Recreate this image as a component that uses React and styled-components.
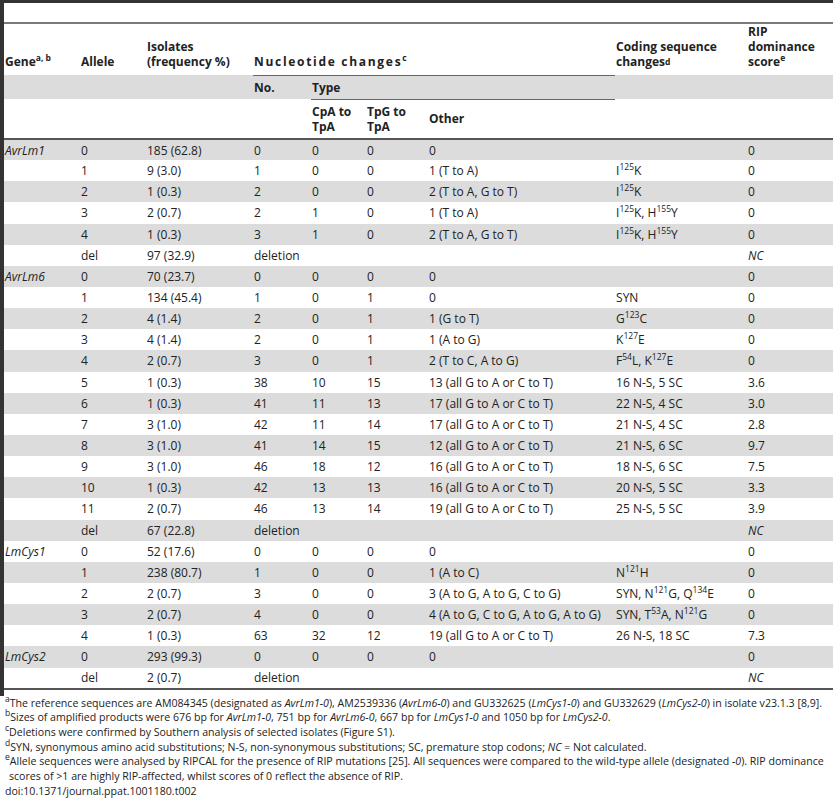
import React from "react";
import styled, { createGlobalStyle } from "styled-components";

const GlobalStyle = createGlobalStyle`
  body {
    margin: 0;
    background: #fff;
    color: #222;
    font-family: "Open Sans", "Noto Sans", sans-serif;
  }
`;

const Page = styled.div`
  width: 833px;
`;

const Frame = styled.div`
  border-top: 3px solid #333;
  border-left: 4px solid #333;
  padding-top: 19px;
  padding-bottom: 6px;
`;

const Table = styled.table`
  width: 829px;
  table-layout: fixed;
  border-collapse: collapse;
  border-top: 2px solid #7a7a7a;
  border-bottom: 2px solid #555;
  font-size: 12px;
`;

const Col = styled.col`
  width: ${(p) => p.$w}px;
`;

const Head = styled.thead`
  border-bottom: 2px solid #555;
`;

const HeadRow = styled.tr`
  height: ${(p) => p.$h}px;
  background: ${(p) => (p.$shade ? "#dcdcdc" : "transparent")};
`;

const HeadCell = styled.th`
  padding: 0 0 ${(p) => (p.$bottom ? "6px" : "0")} 1px;
  text-align: left;
  font-weight: 700;
  line-height: 15px;
  letter-spacing: ${(p) => (p.$wide ? "1.7px" : "normal")};
  vertical-align: ${(p) => (p.$bottom ? "bottom" : "middle")};
  border-bottom: ${(p) => (p.$rule ? "1px solid #666" : "none")};
`;

const Row = styled.tr`
  height: 21.15px;
  background: ${(p) => (p.$shade ? "#dcdcdc" : "transparent")};
`;

const Cell = styled.td`
  padding: 0 0 0 1px;
  line-height: 15px;
  vertical-align: middle;
  white-space: nowrap;
  font-style: ${(p) => (p.$italic ? "italic" : "normal")};
`;

const Sup = styled.sup`
  font-size: 8.5px;
  line-height: 0;
  letter-spacing: normal;
  vertical-align: ${(p) => (p.$low ? "1px" : "5px")};
  font-weight: inherit;
`;

const Notes = styled.div`
  padding: 0 0 0 5px;
  font-size: 10.6px;
  line-height: 14.7px;
  color: #222;
`;

const Note = styled.div`
  white-space: nowrap;
`;

const Indent = styled.span`
  padding-left: 4px;
`;

const Em = styled.i``;

const Mut = ({ a, n, b }) => (
  <>
    {a}
    <Sup>{n}</Sup>
    {b}
  </>
);

const all = "(all G to A or C to T)";

const rows = [
  ["AvrLm1", "0", "185 (62.8)", "0", "0", "0", "0", "", "0"],
  ["", "1", "9 (3.0)", "1", "0", "0", "1 (T to A)", <Mut a="I" n="125" b="K" />, "0"],
  ["", "2", "1 (0.3)", "2", "0", "0", "2 (T to A, G to T)", <Mut a="I" n="125" b="K" />, "0"],
  ["", "3", "2 (0.7)", "2", "1", "0", "1 (T to A)", <><Mut a="I" n="125" b="K" />, <Mut a="H" n="155" b="Y" /></>, "0"],
  ["", "4", "1 (0.3)", "3", "1", "0", "2 (T to A, G to T)", <><Mut a="I" n="125" b="K" />, <Mut a="H" n="155" b="Y" /></>, "0"],
  ["", "del", "97 (32.9)", "deletion", null, null, "", "", "NC"],
  ["AvrLm6", "0", "70 (23.7)", "0", "0", "0", "0", "", "0"],
  ["", "1", "134 (45.4)", "1", "0", "1", "0", "SYN", "0"],
  ["", "2", "4 (1.4)", "2", "0", "1", "1 (G to T)", <Mut a="G" n="123" b="C" />, "0"],
  ["", "3", "4 (1.4)", "2", "0", "1", "1 (A to G)", <Mut a="K" n="127" b="E" />, "0"],
  ["", "4", "2 (0.7)", "3", "0", "1", "2 (T to C, A to G)", <><Mut a="F" n="54" b="L" />, <Mut a="K" n="127" b="E" /></>, "0"],
  ["", "5", "1 (0.3)", "38", "10", "15", `13 ${all}`, "16 N-S, 5 SC", "3.6"],
  ["", "6", "1 (0.3)", "41", "11", "13", `17 ${all}`, "22 N-S, 4 SC", "3.0"],
  ["", "7", "3 (1.0)", "42", "11", "14", `17 ${all}`, "21 N-S, 4 SC", "2.8"],
  ["", "8", "3 (1.0)", "41", "14", "15", `12 ${all}`, "21 N-S, 6 SC", "9.7"],
  ["", "9", "3 (1.0)", "46", "18", "12", `16 ${all}`, "18 N-S, 6 SC", "7.5"],
  ["", "10", "1 (0.3)", "42", "13", "13", `16 ${all}`, "20 N-S, 5 SC", "3.3"],
  ["", "11", "2 (0.7)", "46", "13", "14", `19 ${all}`, "25 N-S, 5 SC", "3.9"],
  ["", "del", "67 (22.8)", "deletion", null, null, "", "", "NC"],
  ["LmCys1", "0", "52 (17.6)", "0", "0", "0", "0", "", "0"],
  ["", "1", "238 (80.7)", "1", "0", "0", "1 (A to C)", <Mut a="N" n="121" b="H" />, "0"],
  ["", "2", "2 (0.7)", "3", "0", "0", "3 (A to G, A to G, C to G)", <>SYN, <Mut a="N" n="121" b="G" />, <Mut a="Q" n="134" b="E" /></>, "0"],
  ["", "3", "2 (0.7)", "4", "0", "0", "4 (A to G, C to G, A to G, A to G)", <>SYN, <Mut a="T" n="53" b="A" />, <Mut a="N" n="121" b="G" /></>, "0"],
  ["", "4", "1 (0.3)", "63", "32", "12", `19 ${all}`, "26 N-S, 18 SC", "7.3"],
  ["LmCys2", "0", "293 (99.3)", "0", "0", "0", "0", "", "0"],
  ["", "del", "2 (0.7)", "deletion", null, null, "", "", "NC"],
];

const widths = [76, 66, 107, 58, 55, 62, 187, 132, 86];

const DataRow = ({ r, i }) => {
  const [gene, allele, iso, no, cpa, tpg, other, coding, rip] = r;
  const del = cpa === null;
  return (
    <Row $shade={i % 2 === 0}>
      <Cell $italic>{gene}</Cell>
      <Cell>{allele}</Cell>
      <Cell>{iso}</Cell>
      {del ? <Cell colSpan={3}>{no}</Cell> : <><Cell>{no}</Cell><Cell>{cpa}</Cell><Cell>{tpg}</Cell></>}
      <Cell>{other}</Cell>
      <Cell>{coding}</Cell>
      <Cell $italic={rip === "NC"}>{rip}</Cell>
    </Row>
  );
};

export default function App() {
  return (
    <Page>
      <GlobalStyle />
      <Frame>
        <Table>
          <colgroup>
            {widths.map((w, i) => (
              <Col key={i} $w={w} />
            ))}
          </colgroup>
          <Head>
            <HeadRow $h={51}>
              <HeadCell $bottom>
                Gene<Sup>a, b</Sup>
              </HeadCell>
              <HeadCell $bottom>Allele</HeadCell>
              <HeadCell $bottom>
                Isolates
                <br />
                (frequency %)
              </HeadCell>
              <HeadCell $bottom $rule $wide colSpan={4}>
                Nucleotide changes<Sup>c</Sup>
              </HeadCell>
              <HeadCell $bottom>
                Coding sequence
                <br />
                changes<Sup $low>d</Sup>
              </HeadCell>
              <HeadCell $bottom>
                RIP
                <br />
                dominance
                <br />
                score<Sup>e</Sup>
              </HeadCell>
            </HeadRow>
            <HeadRow $h={24} $shade>
              <HeadCell />
              <HeadCell />
              <HeadCell />
              <HeadCell>No.</HeadCell>
              <HeadCell $rule colSpan={3}>
                Type
              </HeadCell>
              <HeadCell />
              <HeadCell />
            </HeadRow>
            <HeadRow $h={40}>
              <HeadCell />
              <HeadCell />
              <HeadCell />
              <HeadCell />
              <HeadCell>
                CpA to
                <br />
                TpA
              </HeadCell>
              <HeadCell>
                TpG to
                <br />
                TpA
              </HeadCell>
              <HeadCell>Other</HeadCell>
              <HeadCell />
              <HeadCell />
            </HeadRow>
          </Head>
          <tbody>
            {rows.map((r, i) => (
              <DataRow key={i} r={r} i={i} />
            ))}
          </tbody>
        </Table>
      </Frame>
      <Notes>
        <Note>
          <Sup>a</Sup>The reference sequences are AM084345 (designated as <Em>AvrLm1-0</Em>), AM2539336 (<Em>AvrLm6-0</Em>) and GU332625 (<Em>LmCys1-0</Em>) and GU332629 (<Em>LmCys2-0</Em>) in isolate v23.1.3 [8,9].
        </Note>
        <Note>
          <Sup>b</Sup>Sizes of amplified products were 676 bp for <Em>AvrLm1-0</Em>, 751 bp for <Em>AvrLm6-0</Em>, 667 bp for <Em>LmCys1-0</Em> and 1050 bp for <Em>LmCys2-0</Em>.
        </Note>
        <Note>
          <Sup>c</Sup>Deletions were confirmed by Southern analysis of selected isolates (Figure S1).
        </Note>
        <Note>
          <Sup>d</Sup>SYN, synonymous amino acid substitutions; N-S, non-synonymous substitutions; SC, premature stop codons; <Em>NC</Em> = Not calculated.
        </Note>
        <Note>
          <Sup>e</Sup>Allele sequences were analysed by RIPCAL for the presence of RIP mutations [25]. All sequences were compared to the wild-type allele (designated <Em>-0</Em>). RIP dominance
          <br />
          <Indent>scores of &gt;1 are highly RIP-affected, whilst scores of 0 reflect the absence of RIP.</Indent>
        </Note>
        <Note>doi:10.1371/journal.ppat.1001180.t002</Note>
      </Notes>
    </Page>
  );
}
